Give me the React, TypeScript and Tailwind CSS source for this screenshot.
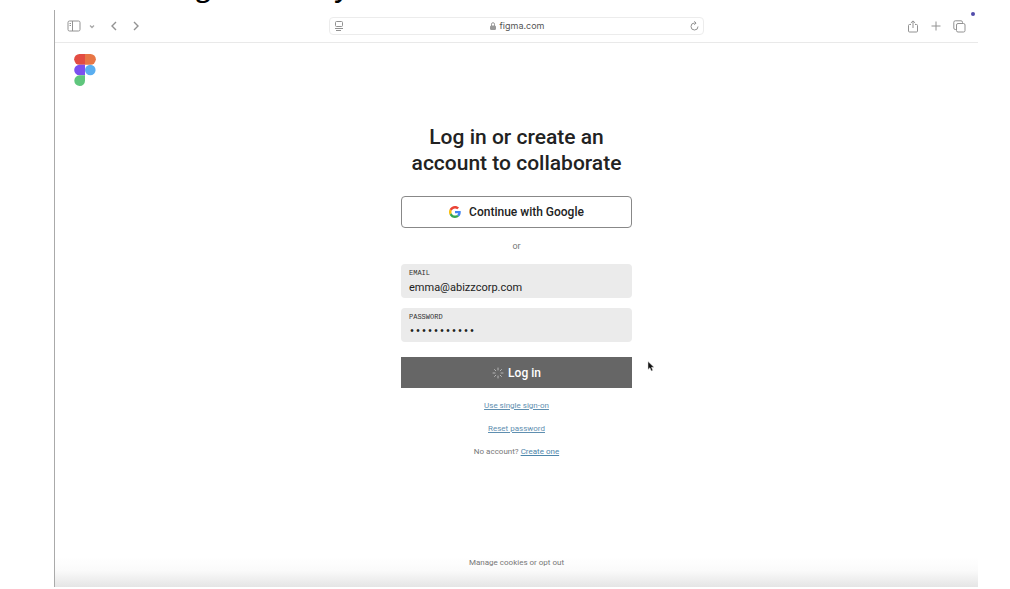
import React, { useState } from "react";

function SidebarIcon() {
  return (
    <svg width="14" height="12" viewBox="0 0 14 12" fill="none" stroke="currentColor">
      <rect x="1" y="1" width="12" height="10" rx="1.5" />
      <path d="M5.5 1v10M2.5 3.5h1.5M2.5 5.5h1.5" />
    </svg>
  );
}

function ReaderIcon() {
  return (
    <svg width="10" height="10" viewBox="0 0 10 10" fill="none" stroke="currentColor">
      <rect x="1.5" y="0.5" width="7" height="5" rx="1" />
      <path d="M1 7.5h8M2 9.5h5" />
    </svg>
  );
}

function FigmaLogo() {
  return (
    <svg width="22" height="32" viewBox="0 0 22 32">
      <path d="M5.5 0H11v10.7H5.5a5.35 5.35 0 0 1 0-10.7z" fill="#e34c42" />
      <path d="M11 0h5.5a5.35 5.35 0 0 1 0 10.7H11z" fill="#e87645" />
      <path d="M5.5 10.7H11v10.6H5.5a5.3 5.3 0 0 1 0-10.6z" fill="#7b50ef" />
      <circle cx="16.3" cy="16" r="5.3" fill="#5aaef0" />
      <path d="M5.5 21.3H11v5.3a5.35 5.35 0 1 1-5.5-5.3z" fill="#5fc67d" />
    </svg>
  );
}

function GoogleLogo() {
  return (
    <svg width="12" height="12" viewBox="0 0 48 48">
      <path fill="#EA4335" d="M24 9.5c3.54 0 6.71 1.22 9.21 3.6l6.85-6.85C35.9 2.38 30.47 0 24 0 14.62 0 6.51 5.38 2.56 13.22l7.98 6.19C12.43 13.72 17.74 9.5 24 9.5z" />
      <path fill="#4285F4" d="M46.98 24.55c0-1.57-.15-3.09-.38-4.55H24v9.02h12.94c-.58 2.96-2.26 5.48-4.78 7.18l7.73 6c4.51-4.18 7.09-10.36 7.09-17.65z" />
      <path fill="#FBBC05" d="M10.53 28.59c-.48-1.45-.76-2.99-.76-4.59s.27-3.14.76-4.59l-7.98-6.19C.92 16.46 0 20.12 0 24c0 3.88.92 7.54 2.56 10.78l7.97-6.19z" />
      <path fill="#34A853" d="M24 48c6.48 0 11.93-2.13 15.89-5.81l-7.73-6c-2.15 1.45-4.92 2.3-8.16 2.3-6.26 0-11.57-4.22-13.47-9.91l-7.98 6.19C6.51 42.62 14.62 48 24 48z" />
    </svg>
  );
}

function Spinner() {
  return (
    <svg width="12" height="12" viewBox="0 0 12 12" stroke="#b5b5b5" strokeLinecap="round">
      <path d="M6 1v2M6 9v2M1 6h2M9 6h2M2.5 2.5l1.3 1.3M8.2 8.2l1.3 1.3M2.5 9.5l1.3-1.3M8.2 3.8l1.3-1.3" />
    </svg>
  );
}

function BrowserBar() {
  return (
    <header className="flex h-[33px] shrink-0 items-center justify-between border-b border-[#e9e9e9] px-3 text-[#929292]">
      <div className="flex flex-1 items-center">
        <button type="button" aria-label="Sidebar">
          <SidebarIcon />
        </button>
        <button type="button" aria-label="Tab groups" className="ml-2">
          <svg width="6" height="5" viewBox="0 0 6 5" fill="none" stroke="#aaa" strokeWidth="1.3">
            <path d="M1 1.5l2 2 2-2" />
          </svg>
        </button>
        <button type="button" aria-label="Back" className="ml-4">
          <svg width="6" height="10" viewBox="0 0 6 10" fill="none" stroke="currentColor" strokeWidth="1.4">
            <path d="M5 1L1 5l4 4" />
          </svg>
        </button>
        <button type="button" aria-label="Forward" className="ml-4">
          <svg width="6" height="10" viewBox="0 0 6 10" fill="none" stroke="currentColor" strokeWidth="1.4">
            <path d="M1 1l4 4-4 4" />
          </svg>
        </button>
      </div>
      <div className="flex h-[18px] w-1/2 max-w-[375px] items-center justify-between rounded-sm border border-[#ececec] px-1">
        <button type="button" aria-label="Reader">
          <ReaderIcon />
        </button>
        <div className="flex items-center gap-1 text-[9px] text-[#555]">
          <svg width="6" height="8" viewBox="0 0 6 8" fill="none" stroke="#999">
            <path d="M1.5 4V2.2a1.5 1.5 0 0 1 3 0V4" />
            <rect x="0.5" y="4" width="5" height="3.5" rx="0.5" fill="#999" />
          </svg>
          <span className="font-['Inter',sans-serif]">figma.com</span>
        </div>
        <button type="button" aria-label="Reload">
          <svg width="9" height="10" viewBox="0 0 9 10" fill="none" stroke="currentColor">
            <path d="M8 5.5A3.5 3.5 0 1 1 4.5 2H6M4.3 0.3L6.1 2 4.3 3.8" />
          </svg>
        </button>
      </div>
      <div className="flex flex-1 items-center justify-end gap-3">
        <button type="button" aria-label="Share">
          <svg width="12" height="13" viewBox="0 0 12 13" fill="none" stroke="currentColor">
            <path d="M4 4.5H2.5a1 1 0 0 0-1 1V11a1 1 0 0 0 1 1h7a1 1 0 0 0 1-1V5.5a1 1 0 0 0-1-1H8M6 8V1M3.8 3L6 0.9 8.2 3" />
          </svg>
        </button>
        <button type="button" aria-label="New tab">
          <svg width="10" height="10" viewBox="0 0 10 10" fill="none" stroke="currentColor">
            <path d="M5 0.5v9M0.5 5h9" />
          </svg>
        </button>
        <button type="button" aria-label="Tab overview">
          <svg width="13" height="13" viewBox="0 0 13 13" fill="none" stroke="currentColor">
            <rect x="3.5" y="3.5" width="8.5" height="8.5" rx="1.5" />
            <path d="M3.5 9.5H2.3A1.5 1.5 0 0 1 .8 8V2.3A1.5 1.5 0 0 1 2.3.8H8a1.5 1.5 0 0 1 1.5 1.5v1.2" />
          </svg>
        </button>
      </div>
    </header>
  );
}

type FieldProps = {
  id: string;
  label: string;
  type: string;
  value: string;
  onChange: (value: string) => void;
  className: string;
};

function Field({ id, label, type, value, onChange, className }: FieldProps) {
  return (
    <div className="flex h-[34px] flex-col rounded-sm bg-[#ebebeb] px-2 pt-1">
      <label htmlFor={id} className="font-['Liberation_Mono',monospace] text-[7px] leading-[10px] text-[#333]">
        {label}
      </label>
      <input
        id={id}
        type={type}
        value={value}
        onChange={(e) => onChange(e.target.value)}
        className={`h-[18px] w-full bg-transparent outline-none ${className}`}
      />
    </div>
  );
}

export default function App() {
  const [email, setEmail] = useState("emma@abizzcorp.com");
  const [password, setPassword] = useState("collaborate");

  return (
    <div className="flex min-h-screen flex-col bg-white pr-8 pb-[2px] pl-[54px] font-['Roboto',sans-serif] text-[#222]">
      <div
        className="flex h-[10px] items-end gap-[124px] overflow-hidden pb-[7px] pl-[142px] font-['Open_Sans',sans-serif] text-[26px] leading-[32px] font-semibold text-black"
        aria-hidden="true"
      >
        <span>g</span>
        <span>y</span>
      </div>
      <div className="relative flex grow flex-col border-l border-[#aaa] bg-linear-to-t from-[#e5e5e5] via-[#fafafa] via-[16px] to-white to-[30px]">
        <span className="absolute top-[2px] right-[3px] size-1 rounded-full bg-[#514bab]" />
        <BrowserBar />
        <div className="pt-[11px] pl-[19px]">
          <FigmaLogo />
        </div>
        <main className="mx-auto mt-[38px] flex w-full max-w-[231px] grow flex-col">
          <h1 className="text-center text-[21px] leading-[26px] font-medium whitespace-nowrap">
            Log in or create an
            <br />
            account to collaborate
          </h1>
          <button
            type="button"
            className="mt-5 flex h-8 items-center justify-center gap-2 rounded-sm border border-[#888] bg-white text-[12px] font-medium"
          >
            <GoogleLogo />
            Continue with Google
          </button>
          <div className="my-3 text-center text-[9px] leading-3 text-[#777]">or</div>
          <form className="flex flex-col" onSubmit={(e) => e.preventDefault()}>
            <div className="flex flex-col gap-[10px]">
              <Field id="email" label="EMAIL" type="email" value={email} onChange={setEmail} className="text-[11px]" />
              <Field
                id="password"
                label="PASSWORD"
                type="password"
                value={password}
                onChange={setPassword}
                className="font-['Liberation_Mono',monospace] text-[10px]"
              />
            </div>
            <button
              type="submit"
              className="mt-[15px] flex h-[31px] items-center justify-center gap-1 bg-[#666] text-[12px] font-medium text-white"
            >
              <Spinner />
              Log in
            </button>
          </form>
          <div className="mt-3 flex flex-col items-center gap-[11px] text-[8px] leading-3 text-[#777]">
            <a href="#sso" className="text-[#5f8fb0] underline">
              Use single sign-on
            </a>
            <a href="#reset" className="text-[#5f8fb0] underline">
              Reset password
            </a>
            <p>
              No account?{" "}
              <a href="#create" className="text-[#4d86ab] underline">
                Create one
              </a>
            </p>
          </div>
        </main>
        <footer className="pb-[18px] text-center text-[8px] leading-3 text-[#777]">
          <button type="button">Manage cookies or opt out</button>
        </footer>
        <svg className="absolute top-[351px] left-[592px]" width="8" height="11" viewBox="0 0 8 11">
          <path d="M1 0.5v8l1.9-1.7L4.3 10l1.5-.7L4.5 6.3H7z" fill="#111" stroke="#ddd" strokeWidth="0.5" />
        </svg>
      </div>
    </div>
  );
}
